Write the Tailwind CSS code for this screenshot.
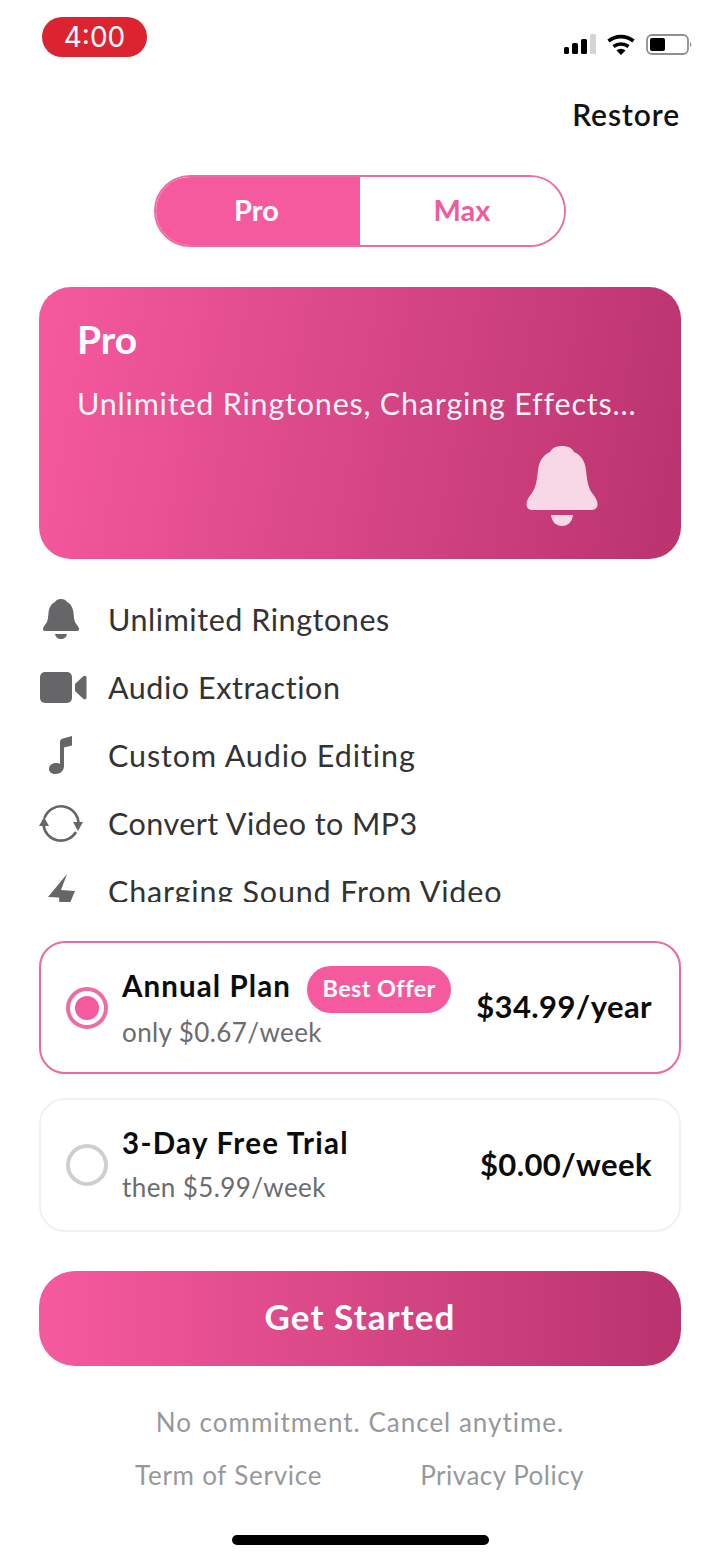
<!DOCTYPE html>
<html>
<head>
    <script src="https://cdn.jsdelivr.net/npm/@tailwindcss/browser@4"></script>
</head>
<body class="bg-white">
    <div class="w-[720px] h-[1560px] overflow-hidden font-['Lato','Noto_Sans',sans-serif] flex flex-col">
        <!-- Status bar -->
        <div class="h-[75px] pl-[42px] pr-[26px] pt-[17px] flex justify-between items-start shrink-0">
            <div class="w-[105px] h-[40px] rounded-[20px] bg-[#dc2430] text-white text-[28px] leading-[41px] text-center font-['Inter',sans-serif]">4:00</div>
            <svg class="mt-[15px]" width="130" height="24" viewBox="0 0 130 24">
                <rect x="0" y="15" width="5" height="7" rx="1.5" fill="#000"/>
                <rect x="8" y="11" width="6" height="11" rx="1.5" fill="#000"/>
                <rect x="17" y="7" width="6" height="15" rx="1.5" fill="#000"/>
                <rect x="26" y="2" width="6" height="20" rx="1.5" fill="#d4d4d4"/>
                <path d="M44.500 9A20 20 0 0 1 69.500 9" fill="none" stroke="#000" stroke-width="3.600"/>
                <path d="M49.500 14.500A13 13 0 0 1 64.500 14.500" fill="none" stroke="#000" stroke-width="3.600"/>
                <path d="M57 23l-4.500-4.500a6.500 6.500 0 0 1 9 0z" fill="#000"/>
                <rect x="83" y="3" width="41" height="19" rx="5" fill="none" stroke="#8f8f8f" stroke-width="1.800"/>
                <rect x="86" y="6" width="15" height="13" rx="2" fill="#000"/>
                <path d="M126 10a3 3 0 0 1 0 5z" fill="#8f8f8f"/>
            </svg>
        </div>

        <!-- Restore -->
        <div class="h-[100px] pr-[40px] pt-[19px] text-right text-[30px] leading-[40px] font-semibold tracking-[0.9px] text-[#111] shrink-0">Restore</div>

        <!-- Pro / Max toggle -->
        <div class="flex justify-center shrink-0">
            <div class="w-[412px] h-[72px] rounded-[36px] border-2 border-[#ee6ba3] overflow-hidden flex text-[29px] font-bold">
                <div class="w-[204px] bg-[#f65a9e] text-white flex items-center justify-center pb-[2px] pr-[3px]">Pro</div>
                <div class="flex-1 bg-white text-[#ee5c9d] flex items-center justify-center pb-[2px]">Max</div>
            </div>
        </div>

        <!-- Pro card -->
        <div class="relative mx-[39px] mt-[40px] h-[272px] rounded-[32px] bg-[linear-gradient(100deg,#f65a9e,#b9336e)] text-white px-[38px] pt-[30px] shrink-0">
            <div class="text-[39px] leading-[44px] font-bold">Pro</div>
            <div class="mt-[20px] text-[30.5px] leading-[44px] whitespace-nowrap tracking-[0.8px] text-white/95">Unlimited Ringtones, Charging Effects...</div>
            <svg class="absolute left-[487px] top-[159px]" width="72" height="80" viewBox="0 0 72 80">
                <path d="M36 0C42 0 46 2 48 6C55 9 59 15 60 24C61 34 62 41 66 47C69 51 71.500 54 71.500 58C71.500 62 69 64 66 64H6C3 64 .5 62 .5 58C.5 54 3 51 6 47C10 41 11 34 12 24C13 15 17 9 24 6C26 2 30 0 36 0z" fill="#f8d7e6"/>
                <path d="M25 69H47C46 76 42 80 36 80C30 80 26 76 25 69z" fill="#f8d7e6"/>
            </svg>
        </div>

        <!-- Feature list -->
        <div class="mt-[36px] mx-[39px] h-[307px] overflow-hidden flex flex-col gap-[20px] text-[30.5px] leading-[48px] text-[#333] tracking-[0.55px] shrink-0">
            <div class="flex items-center h-[48px] shrink-0">
                <div class="w-[69px] shrink-0 pl-[4px]">
                    <svg width="36" height="40" viewBox="0 0 36 40"><path d="M18 0c3 0 5 1 6 3 4 2 6 6 6.500 11 .5 6 1 9 3.500 12 1 1.500 2 2.500 2 4 0 1.500-1 2-2.500 2h-31C1 32 0 31.500 0 30c0-1.500 1-2.500 2-4 2.500-3 3-6 3.500-12C6 9 8 5 12 3c1-2 3-3 6-3z" fill="#666668"/><path d="M12 35h12c-.5 3-3 5-6 5s-5.500-2-6-5z" fill="#666668"/></svg>
                </div>
                <span>Unlimited Ringtones</span>
            </div>
            <div class="flex items-center h-[48px] shrink-0">
                <div class="w-[69px] shrink-0 pl-[1px]">
                    <svg width="47" height="31" viewBox="0 0 47 31"><rect width="32" height="31" rx="5" fill="#666668"/><path d="M35 12l8-7.500c2-1.500 3.500-1 3.500 1.500v19c0 2.500-1.500 3-3.500 1.500L35 19z" fill="#666668"/></svg>
                </div>
                <span>Audio Extraction</span>
            </div>
            <div class="flex items-center h-[48px] shrink-0">
                <div class="w-[69px] shrink-0 pl-[10px]">
                    <svg width="24" height="38" viewBox="0 0 24 38"><path d="M11 6c0-2 1-3 3-3.500L23 0v9.500L15 11.500V30c0 4.500-3.500 8-8.500 8C3 38 0 36 0 33c0-3.500 3-6 7-6 1.500 0 3 .3 4 1z" fill="#666668"/></svg>
                </div>
                <span class="tracking-[0.9px]">Custom Audio Editing</span>
            </div>
            <div class="flex items-center h-[48px] shrink-0">
                <div class="w-[70px] shrink-0 -ml-[1px]">
                    <svg width="46" height="38" viewBox="0 0 46 38">
                        <path d="M6.500 14A17.500 17.500 0 0 1 40.500 19" fill="none" stroke="#666668" stroke-width="2.600"/>
                        <path d="M38 28A17.500 17.500 0 0 1 5.500 21" fill="none" stroke="#666668" stroke-width="2.600"/>
                        <path d="M6 13L11 22H1z" fill="#666668"/>
                        <path d="M35 18H45L40 27z" fill="#666668"/>
                    </svg>
                </div>
                <span class="tracking-[0.45px]">Convert Video to MP3</span>
            </div>
            <div class="flex items-center h-[48px] shrink-0">
                <div class="w-[69px] shrink-0 pl-[9px]">
                    <svg width="28" height="36" viewBox="0 0 28 36"><path d="M19 1L13 17L27 18L22 30L12 36L11 24.500L0 24z" fill="#666668"/></svg>
                </div>
                <span class="tracking-[0.82px]">Charging Sound From Video</span>
            </div>
        </div>

        <!-- Plans -->
        <div class="mt-[39px] mx-[39px] flex flex-col gap-[24px] shrink-0">
            <div class="h-[133px] rounded-[26px] border-2 border-[#e96aa2] flex items-center pl-[25px] pr-[27px]">
                <div class="w-[42px] h-[42px] rounded-full border-[4px] border-[#ee6ba3] flex items-center justify-center shrink-0">
                    <div class="w-[24px] h-[24px] rounded-full bg-[#f65a9e]"></div>
                </div>
                <div class="ml-[14px] flex-1">
                    <div class="flex items-center h-[47px]">
                        <span class="pb-[6px] text-[29.5px] font-bold text-[#0c0c0c] tracking-[1.1px]">Annual Plan</span>
                        <span class="ml-[16px] h-[47px] w-[144px] rounded-[24px] bg-[#f65a9e] text-white text-[23.5px] font-bold flex items-center justify-center tracking-[0.4px]">Best Offer</span>
                    </div>
                    <div class="mt-[1px] text-[26px] leading-[36px] text-[#6c6c70] tracking-[0.4px]">only $0.67/week</div>
                </div>
                <div class="pb-[2px] text-[31px] font-bold text-[#0c0c0c] tracking-[0.4px]">$34.99/year</div>
            </div>
            <div class="h-[134px] rounded-[26px] border-2 border-[#f1f1f3] flex items-center pl-[25px] pr-[27px]">
                <div class="w-[42px] h-[42px] rounded-full border-[4px] border-[#cfcfcf] shrink-0"></div>
                <div class="ml-[14px] flex-1 pb-[3px]">
                    <div class="h-[46px] pb-[3px] flex items-center text-[29.5px] font-bold text-[#0c0c0c] tracking-[1.3px]">3-Day Free Trial</div>
                    <div class="mt-[1px] text-[26px] leading-[36px] text-[#6c6c70] tracking-[0.4px]">then $5.99/week</div>
                </div>
                <div class="pb-[2px] text-[31px] font-bold text-[#0c0c0c] tracking-[0.4px]">$0.00/week</div>
            </div>
        </div>

        <!-- CTA -->
        <div class="mt-[39px] mx-[39px] h-[95px] rounded-[36px] bg-gradient-to-r from-[#f65a9e] to-[#b9336e] text-white text-[35px] font-bold flex items-center justify-center tracking-[1.1px] pb-[4px] shrink-0">Get Started</div>

        <!-- Footer -->
        <div class="mt-[38px] text-center text-[26px] leading-[36px] text-[#98989c] tracking-[1px] shrink-0">No commitment. Cancel anytime.</div>
        <div class="mt-[17px] flex text-[26px] leading-[36px] text-[#98989c] tracking-[0.5px] shrink-0 pl-[135px] gap-[98px]">
            <span class="tracking-[0.75px]">Term of Service</span>
            <span>Privacy Policy</span>
        </div>

        <!-- Home indicator -->
        <div class="mt-[42px] mx-auto w-[257px] h-[10px] rounded-full bg-black shrink-0"></div>
    </div>
</body>
</html>
